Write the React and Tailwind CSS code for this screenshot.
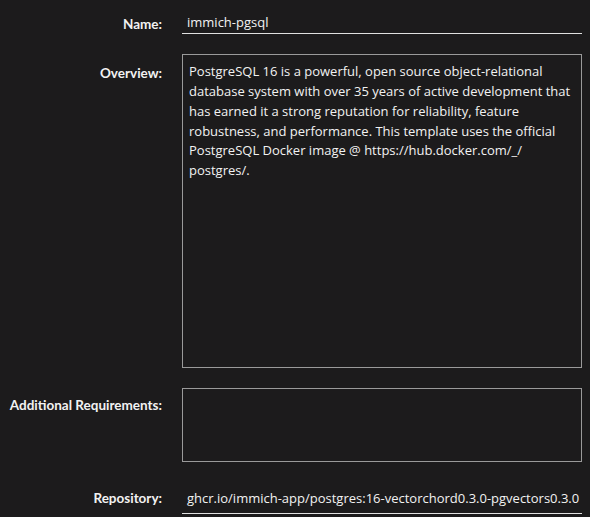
import React from 'react';

const Row = ({ label, labelClass = '', children, className = '' }) => (
  <div className={`flex items-start gap-[20px] ${className}`}>
    <div className={`w-[162px] shrink-0 flex justify-end whitespace-nowrap font-bold font-['Lato',sans-serif] text-[13.5px] ${labelClass}`}>
      <span>{label}</span>
    </div>
    {children}
  </div>
);

const App = () => {
  return (
    <div className="min-h-[517px] w-full bg-[#1c1b1c] text-[13px] text-[#f2f2f2] font-['Open_Sans',sans-serif] overflow-hidden">
      {/* Name */}
      <Row label="Name:" labelClass="pt-[12px]" className="pt-[2px]">
        <div className="w-[400px] h-[32px] border-b border-[#e0e0e0] px-[5px] pt-[10px] leading-[20px]">
          immich-pgsql
        </div>
      </Row>

      {/* Overview */}
      <Row label="Overview:" labelClass="pt-[9px]" className="mt-[20px]">
        <div className="w-[400px] h-[314px] border border-[#9a9a9a] px-[6px] pt-[7px] leading-[19.8px]">
          PostgreSQL 16 is a powerful, open source object-relational database system with over 35 years of active development that has earned it a strong reputation for reliability, feature robustness, and performance. This template uses the official PostgreSQL Docker image @ https://hub.docker.com/_/ postgres/.
        </div>
      </Row>

      {/* Additional Requirements */}
      <Row label="Additional Requirements:" labelClass="pt-[7px]" className="mt-[20px]">
        <div className="w-[400px] h-[74px] border border-[#9a9a9a]" />
      </Row>

      {/* Repository */}
      <Row label="Repository:" labelClass="pt-[25px]" className="mt-[1px]">
        <div className="w-[400px] h-[51px] border-b border-[#e0e0e0] px-[5px] pt-[25px] leading-[20px] whitespace-nowrap">
          ghcr.io/immich-app/postgres:16-vectorchord0.3.0-pgvectors0.3.0
        </div>
      </Row>
    </div>
  );
};

export default App;
